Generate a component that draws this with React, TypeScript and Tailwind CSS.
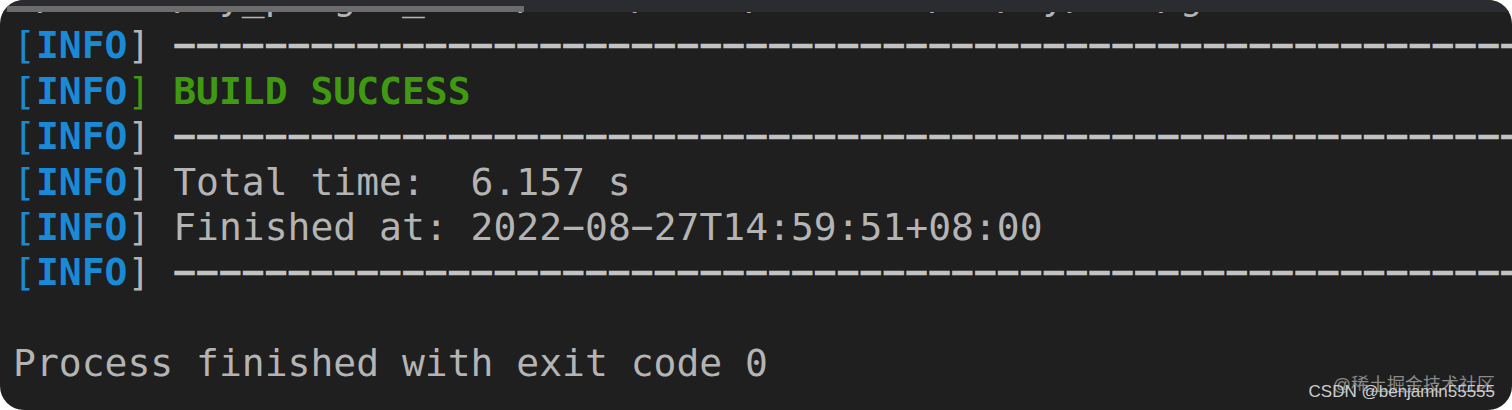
import React from "react";

const DASHES = "\u2212".repeat(70);

function Info({ close = "gray" }: { close?: "gray" | "green" }) {
  return (
    <>
      <span className="text-[#1a8ad6]">
        [<span className="font-bold">INFO</span>
      </span>
      <span className={close === "green" ? "text-[#3f9a12]" : "text-[#b4b4b4]"}>]</span>
      <span> </span>
    </>
  );
}

export default function App() {
  return (
    <div className="w-[1512px] h-[410px] bg-white">
      <div className="relative h-full overflow-hidden rounded-[24px] bg-[#1f1f1f] font-['DejaVu_Sans_Mono','Liberation_Mono',monospace] text-[38px] leading-[45.4px] text-[#b4b4b4]">
        <div className="mt-[-22px] pl-[13px] whitespace-pre">
          <div className="h-[45.4px] leading-[37px]"> /Users/my_prog01_docs/core/main/classes/to/my/lib/gson</div>
          <div className="h-[45.4px]">
            <Info />
            <span className="font-bold text-[#c2c2c2]">{DASHES}</span>
          </div>
          <div className="h-[45.4px]">
            <Info close="green" />
            <span className="font-bold text-[#3f9a12]">BUILD SUCCESS</span>
          </div>
          <div className="h-[45.4px]">
            <Info />
            <span className="font-bold text-[#c2c2c2]">{DASHES}</span>
          </div>
          <div className="h-[45.4px]">
            <Info />
            <span>Total time:  6.157 s</span>
          </div>
          <div className="h-[45.4px]">
            <Info />
            <span>Finished at: 2022{"\u2212"}08{"\u2212"}27T14:59:51+08:00</span>
          </div>
          <div className="h-[45.4px]">
            <Info />
            <span className="font-bold text-[#c2c2c2]">{DASHES}</span>
          </div>
          <div className="h-[45.4px]"> </div>
          <div className="h-[45.4px]">Process finished with exit code 0</div>
        </div>

        <div className="absolute left-0 top-0 h-[12px] w-full bg-[#2b2c2f]">
          <div className="absolute left-[7px] top-[6px] h-[6px] w-[517px] bg-[#6c6c6c]" />
        </div>

        <div className="absolute right-[17px] top-[376px] whitespace-nowrap font-['Liberation_Sans','Noto_Sans_CJK_SC',sans-serif] text-[18px] leading-none text-[#8a8a8a]">
          @稀土掘金技术社区
        </div>
        <div className="absolute right-[17px] top-[383px] whitespace-nowrap font-['Liberation_Sans',Arial,sans-serif] text-[17px] leading-none text-[#cdcdcd]">
          CSDN @benjamin55555
        </div>
      </div>
    </div>
  );
}
